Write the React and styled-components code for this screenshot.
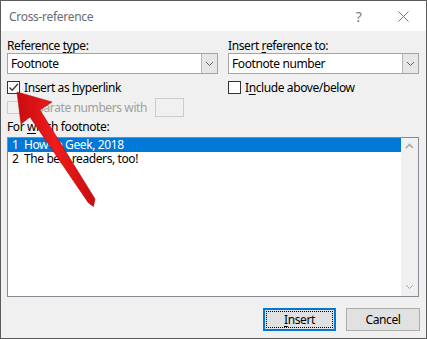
import React from 'react'
import styled, { createGlobalStyle } from 'styled-components'

const GlobalStyle = createGlobalStyle`
    html, body {
        margin: 0;
        padding: 0;
        background: #fff;
    }
    body {
        font-family: "Noto Sans", "Open Sans", sans-serif;
        font-size: 12px;
        letter-spacing: -0.4px;
        color: #000;
    }
    * { box-sizing: border-box; }
`

const Window = styled.div`
    position: relative;
    width: 427px;
    height: 339px;
    border: 1px solid #5b5b5b;
    background: #f0f0f0;
    display: flex;
    flex-direction: column;
    overflow: hidden;
`
const TitleBar = styled.div`
    height: 30px;
    flex: none;
    background: #fff;
    display: flex;
    align-items: center;
    padding-left: 8px;
    color: #6b6b6b;
`
const Title = styled.div`
    flex: 1;
    letter-spacing: -0.3px;
`
const TitleButton = styled.div`
    width: 45px;
    height: 30px;
    display: flex;
    align-items: center;
    justify-content: center;
    color: #7a7a7a;
    font-size: 14px;
`
const Body = styled.div`
    flex: 1;
    display: flex;
    flex-direction: column;
    padding: 7px 6px 0 6px;
`
const Grid = styled.div`
    display: grid;
    grid-template-columns: 211px 191px;
    column-gap: 10px;
`
const Col = styled.div`
    display: flex;
    flex-direction: column;
`
const Label = styled.div`
    height: 15px;
    line-height: 15px;
    white-space: nowrap;
    color: ${p => (p.disabled ? '#a0a0a0' : '#000')};
    margin-top: ${p => p.top || 0}px;
    width: ${p => (p.w ? `${p.w}px` : 'auto')};
`
const U = styled.span`
    text-decoration: underline;
    text-underline-offset: 2px;
`
const Select = styled.div`
    height: 21px;
    border: 1px solid #a5a5a5;
    background: #fff;
    display: flex;
    align-items: stretch;
`
const SelectValue = styled.div`
    flex: 1;
    padding-left: 3px;
    line-height: 19px;
`
const DropButton = styled.div`
    width: 16px;
    background: #e6e6e6;
    border-left: 1px solid #b4b4b4;
    display: flex;
    align-items: center;
    justify-content: center;
`
const CheckRow = styled.div`
    display: flex;
    align-items: center;
    gap: 4px;
    height: ${p => p.h || 15}px;
    margin-top: ${p => p.top || 0}px;
`
const Box = styled.div`
    width: 13px;
    height: 13px;
    flex: none;
    border: 1px solid ${p => (p.disabled ? '#cccccc' : '#333')};
    background: ${p => (p.disabled ? '#f0f0f0' : '#fff')};
    display: flex;
    align-items: center;
    justify-content: center;
`
const SmallInput = styled.div`
    width: 29px;
    height: 19px;
    border: 1px solid #cccccc;
    background: #f0f0f0;
`
const ListBox = styled.div`
    margin-top: 3px;
    height: 160px;
    width: 412px;
    border: 1px solid #868a92;
    background: #fff;
    display: flex;
`
const Items = styled.div`
    flex: 1;
`
const Item = styled.div`
    height: 14px;
    line-height: 14px;
    display: flex;
    padding-left: 4px;
    background: ${p => (p.selected ? '#0078d7' : 'transparent')};
    color: ${p => (p.selected ? '#fff' : '#000')};
    white-space: nowrap;
`
const Num = styled.span`
    width: 12px;
`
const ScrollBar = styled.div`
    width: 17px;
    background: #f0f0f0;
    display: flex;
    flex-direction: column;
    justify-content: space-between;
    align-items: center;
    padding: 5px 0 6px;
`
const ButtonRow = styled.div`
    display: flex;
    justify-content: flex-end;
    gap: 10px;
    margin-top: 11px;
    width: 413px;
`
const Button = styled.div`
    width: ${p => p.w}px;
    height: 23px;
    background: #e1e1e1;
    border: ${p => (p.primary ? '2px solid #0078d7' : '1px solid #adadad')};
    display: flex;
    align-items: center;
    justify-content: center;
    padding: 1px;
`
const Focus = styled.div`
    width: 100%;
    height: 100%;
    border: 1px dotted #000;
    display: flex;
    align-items: center;
    justify-content: center;
`
const Overlay = styled.svg`
    position: absolute;
    left: -1px;
    top: -1px;
    pointer-events: none;
`

const Chevron = ({ up, color = '#606060' }) => (
    <svg width="9" height="6" viewBox="0 0 9 6">
        <polyline
            points={up ? '1,5 4.5,1.5 8,5' : '1,1 4.5,4.5 8,1'}
            fill="none"
            stroke={color}
            strokeWidth={up ? 1.6 : 1}
        />
    </svg>
)

const Check = () => (
    <svg width="11" height="11" viewBox="0 0 11 11">
        <polyline points="1.5,5.5 4.2,8.3 9.8,2" fill="none" stroke="#3a3a3a" strokeWidth="1.4" />
    </svg>
)

export default function App() {
    return (
        <>
            <GlobalStyle />
            <Window>
                <TitleBar>
                    <Title>Cross-reference</Title>
                    <TitleButton>?</TitleButton>
                    <TitleButton>
                        <svg width="11" height="11" viewBox="0 0 11 11">
                            <path d="M0.5 0.5 L10.5 10.5 M10.5 0.5 L0.5 10.5" stroke="#777" strokeWidth="1" />
                        </svg>
                    </TitleButton>
                </TitleBar>
                <Body>
                    <Grid>
                        <Col>
                            <Label>Reference <U>ty</U>pe:</Label>
                            <Select>
                                <SelectValue>Footnote</SelectValue>
                                <DropButton><Chevron /></DropButton>
                            </Select>
                            <CheckRow top={6}>
                                <Box><Check /></Box>
                                <span>Insert as <U>h</U>yperlink</span>
                            </CheckRow>
                        </Col>
                        <Col>
                            <Label>Insert <U>r</U>eference to:</Label>
                            <Select>
                                <SelectValue>Footnote number</SelectValue>
                                <DropButton><Chevron /></DropButton>
                            </Select>
                            <CheckRow top={6}>
                                <Box />
                                <span>I<U>n</U>clude above/below</span>
                            </CheckRow>
                        </Col>
                    </Grid>
                    <CheckRow top={3} h={19}>
                        <Box disabled />
                        <Label disabled w={127}>Separate numbers with</Label>
                        <SmallInput />
                    </CheckRow>
                    <Label top={2}>For <U>w</U>hich footnote:</Label>
                    <ListBox>
                        <Items>
                            <Item selected><Num>1</Num>How-to Geek, 2018</Item>
                            <Item><Num>2</Num>The best readers, too!</Item>
                        </Items>
                        <ScrollBar>
                            <Chevron up color="#a6a6a6" />
                            <Chevron color="#a6a6a6" />
                        </ScrollBar>
                    </ListBox>
                    <ButtonRow>
                        <Button primary w={73}>
                            <Focus><span><U>I</U>nsert</span></Focus>
                        </Button>
                        <Button w={74}>Cancel</Button>
                    </ButtonRow>
                </Body>
                <Overlay width="427" height="339" viewBox="0 0 427 339">
                    <defs>
                        <linearGradient id="red" x1="0" y1="0" x2="1" y2="0">
                            <stop offset="0" stopColor="#c80c10" />
                            <stop offset="0.5" stopColor="#f01c1c" />
                            <stop offset="1" stopColor="#c80c10" />
                        </linearGradient>
                    </defs>
                    <polygon
                        points="17,92 52,102 40,110 95,199 93.5,206.5 88.5,203 30,117 21,124"
                        fill="url(#red)"
                        stroke="#b00a0e"
                        strokeWidth="0.6"
                        strokeLinejoin="round"
                    />
                </Overlay>
            </Window>
        </>
    )
}
